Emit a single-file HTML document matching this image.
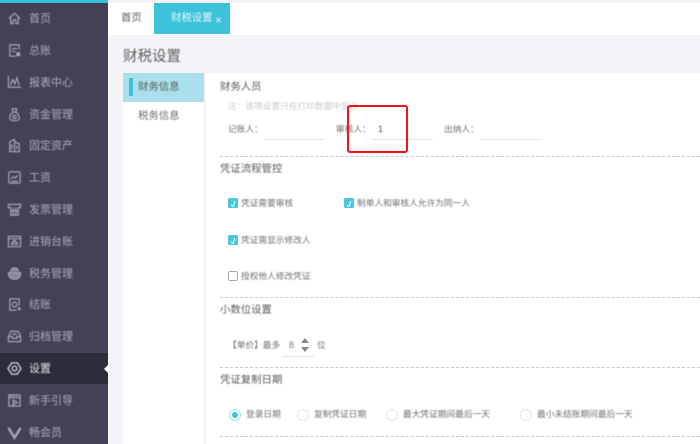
<!DOCTYPE html>
<html lang="zh">
<head>
<meta charset="utf-8">
<style>
html,body{margin:0;padding:0;width:700px;height:444px;overflow:hidden;background:#fff}
body{font-family:"Liberation Sans","Noto Sans CJK SC",sans-serif;position:relative}
.a{position:absolute}
.t{position:absolute;white-space:nowrap;line-height:14px;filter:blur(.45px)}
.m{position:absolute;left:29px;font-size:11px;color:#adadba;white-space:nowrap;line-height:14px;filter:blur(.45px)}
.i{position:absolute;left:7px;width:15px;height:15px;fill:none;stroke:#a5a5b3;stroke-width:1.3;filter:blur(.4px)}
.f{font-size:8.7px;color:#707070}
.h{font-size:10.4px;color:#5c5c5c}
.d{position:absolute;left:220px;width:480px;height:0;border-top:1px dashed #c9c9c9}
.u{position:absolute;height:0;border-top:1px solid #e2e2e2}
.c{position:absolute;width:10px;height:10px;background:#4cc6dd;border-radius:1.5px;left:228px;filter:blur(.25px)}
.r{position:absolute;width:10px;height:10px;border:1px solid #e4e4e4;border-radius:50%;background:#fff}
</style>
</head>
<body>
<!-- page background -->
<div class="a" style="left:108px;top:0;width:592px;height:444px;background:#f2f4f7"></div>
<div class="a" style="left:108px;top:3px;width:592px;height:32px;background:#fff"></div>
<!-- sidebar -->
<div class="a" style="left:0;top:0;width:108px;height:444px;background:#434156"></div>
<div class="a" style="left:0;top:0;width:108px;height:3px;background:#36c3da"></div>
<div class="a" style="left:0;top:353px;width:108px;height:31px;background:#2c2d3b"></div>
<div class="a" style="left:104px;top:364px;width:0;height:0;border-top:5px solid transparent;border-bottom:5px solid transparent;border-right:5px solid #fff"></div>

<svg class="i" style="top:11px" viewBox="0 0 16 16"><path d="M2 8L8 2.500L14 8M4 7V13.500H6.500V10Q8 8 9.500 10V13.500H12V7"/></svg>
<svg class="i" style="top:43px" viewBox="0 0 16 16"><path d="M13 7V2H3V14H9M5 6H11M5 9H9"/><rect x="10.500" y="10.500" width="3" height="3" fill="#a5a5b3"/></svg>
<svg class="i" style="top:74px" viewBox="0 0 16 16"><path d="M1.500 2V14H15M3.500 12L6 6L8.500 10.500L10.500 4L13 12"/></svg>
<svg class="i" style="top:107px" viewBox="0 0 16 16"><path d="M5.500 2H10.500L9.500 5.500H6.500ZM6.500 5.500Q2.500 8 3 12.500Q3.500 14.500 8 14.500Q12.500 14.500 13 12.500Q13.500 8 9.500 5.500"/><circle cx="8" cy="10.500" r="1.800"/></svg>
<svg class="i" style="top:138px" viewBox="0 0 16 16"><path d="M3 14.500V4L8 1.500V14.500M8 4L13 6V14.500M2 14.500H14M5 6.500V12M10.500 8V12"/></svg>
<svg class="i" style="top:170px" viewBox="0 0 16 16"><rect x="2" y="2" width="12" height="12" rx="1.500"/><path d="M4.500 9.500L7 7L9 8.500L11.500 5.500M4.500 12H11.500"/></svg>
<svg class="i" style="top:202px" viewBox="0 0 16 16"><path d="M1.500 2.500H14.500V6H12V14H4V6H1.500ZM6.500 6V14M9.500 6V14M4 9.500H12"/></svg>
<svg class="i" style="top:234px" viewBox="0 0 16 16"><rect x="1.500" y="2.500" width="13" height="11"/><path d="M1.500 5H14.500M5 11V9H7V7H9V9H11V11Z"/></svg>
<svg class="i" style="top:266px" viewBox="0 0 16 16"><path d="M4 6Q4 2 8 2Q12 2 12 6M1.500 7H14.500Q14.500 14 8 14Q1.500 14 1.500 7Z" fill="#a5a5b3" fill-opacity=".7"/></svg>
<svg class="i" style="top:297px" viewBox="0 0 16 16"><path d="M10 14H3V2H13V9"/><circle cx="8" cy="8" r="2.500"/><path d="M11 12.500H15M13 10.500V14.500"/></svg>
<svg class="i" style="top:329px" viewBox="0 0 16 16"><path d="M4 2.500H12L14.500 8V13.500H1.500V8ZM1.500 8H5.500V10H10.500V8H14.500M5.500 5.500H10.500"/></svg>
<svg class="i" style="top:361px;stroke:#dcdce4" viewBox="0 0 16 16"><path d="M5 2H11L15 8L11 14H5L1 8Z"/><circle cx="8" cy="8" r="2.500"/></svg>
<svg class="i" style="top:393px" viewBox="0 0 16 16"><rect x="2" y="2" width="12" height="12"/><path d="M2 5H14M4 2V5M7 2V5M10 2V5M6.500 7.500L11 10L6.500 12.500Z"/></svg>
<svg class="i" style="top:425px;stroke-width:2.600" viewBox="0 0 16 16"><path d="M1.500 3L8 13.500L14.500 3"/></svg>

<div class="m" style="top:12px">首页</div>
<div class="m" style="top:44px">总账</div>
<div class="m" style="top:76px">报表中心</div>
<div class="m" style="top:108px">资金管理</div>
<div class="m" style="top:139px">固定资产</div>
<div class="m" style="top:171px">工资</div>
<div class="m" style="top:203px">发票管理</div>
<div class="m" style="top:235px">进销台账</div>
<div class="m" style="top:267px">税务管理</div>
<div class="m" style="top:298px">结账</div>
<div class="m" style="top:330px">归档管理</div>
<div class="m" style="top:362px;color:#e4e4ea">设置</div>
<div class="m" style="top:394px">新手引导</div>
<div class="m" style="top:426px">畅会员</div>

<!-- tabs -->
<div class="t" style="left:121px;top:12px;font-size:10.4px;color:#5c5c5c">首页</div>
<div class="a" style="left:154px;top:3px;width:76px;height:31px;background:#3cc3da"></div>
<div class="t" style="left:171px;top:12px;font-size:10.4px;color:#e6f8fb">财税设置</div>
<div class="t" style="left:215px;top:13px;font-size:12px;color:#e6f8fb">×</div>

<!-- title -->
<div class="t" style="left:123px;top:49px;font-size:14.5px;line-height:16px;color:#5c5c5c">财税设置</div>

<!-- left tabs -->
<div class="a" style="left:123px;top:73px;width:81px;height:371px;background:#fff"></div>
<div class="a" style="left:123px;top:73px;width:81px;height:29px;background:#a9e0ec"></div>
<div class="a" style="left:129px;top:78px;width:4px;height:18px;background:#3cc3da"></div>
<div class="t" style="left:138px;top:81px;font-size:10.4px;color:#5c5c5c">财务信息</div>
<div class="t" style="left:138px;top:110px;font-size:10.4px;color:#6c6c6c">税务信息</div>

<!-- main -->
<div class="a" style="left:206px;top:73px;width:494px;height:371px;background:#fff"></div>

<div class="t h" style="left:220px;top:81px">财务人员</div>
<div class="t" style="left:228px;top:99px;font-size:8.7px;color:#c8c8c8">注：该项设置只在打印数据中显示</div>
<div class="t f" style="left:228px;top:122px">记账人：</div>
<div class="u" style="left:264px;top:139px;width:60px"></div>
<div class="t f" style="left:336px;top:122px">审核人：</div>
<div class="t" style="left:378px;top:122px;font-size:9px;color:#555">1</div>
<div class="u" style="left:372px;top:139px;width:61px"></div>
<div class="t f" style="left:444px;top:122px">出纳人：</div>
<div class="u" style="left:481px;top:139px;width:60px"></div>
<div class="d" style="top:156px"></div>

<!-- red box -->
<div class="a" style="left:347px;top:105px;width:57px;height:44px;border:2px solid #f0141a;border-radius:3px"></div>

<div class="t h" style="left:220px;top:163px">凭证流程管控</div>

<div class="c" style="top:198px"></div>
<svg class="a" style="left:228px;top:198px" width="10" height="10" viewBox="0 0 10 10"><path d="M3 7L5 8.500L7 3" fill="none" stroke="#fff" stroke-width="1"/></svg>
<div class="t f" style="left:241px;top:196px">凭证需要审核</div>

<div class="c" style="top:198px;left:344px"></div>
<svg class="a" style="left:344px;top:198px" width="10" height="10" viewBox="0 0 10 10"><path d="M3 7L5 8.500L7 3" fill="none" stroke="#fff" stroke-width="1"/></svg>
<div class="t f" style="left:357px;top:196px">制单人和审核人允许为同一人</div>

<div class="c" style="top:235px"></div>
<svg class="a" style="left:228px;top:235px" width="10" height="10" viewBox="0 0 10 10"><path d="M3 7L5 8.500L7 3" fill="none" stroke="#fff" stroke-width="1"/></svg>
<div class="t f" style="left:241px;top:233px">凭证需显示修改人</div>

<div class="a" style="left:228px;top:271px;width:8px;height:8px;border:1px solid #aaa;border-radius:2px;background:#fff"></div>
<div class="t f" style="left:241px;top:269px">授权他人修改凭证</div>

<div class="d" style="top:297px"></div>
<div class="t h" style="left:220px;top:304px">小数位设置</div>

<div class="t f" style="left:228px;top:338px">【单价】最多</div>
<div class="t" style="left:289px;top:338px;font-size:9px;color:#777">8</div>
<div class="a" style="left:301px;top:338px;width:0;height:0;border-left:4px solid transparent;border-right:4px solid transparent;border-bottom:5px solid #888"></div>
<div class="a" style="left:301px;top:347px;width:0;height:0;border-left:4px solid transparent;border-right:4px solid transparent;border-top:5px solid #888"></div>
<div class="u" style="left:282px;top:356px;width:32px"></div>
<div class="t f" style="left:317px;top:338px">位</div>

<div class="d" style="top:367px"></div>
<div class="t h" style="left:220px;top:374px">凭证复制日期</div>

<div class="r" style="left:229px;top:409px;border-color:#a5e2ee"></div>
<div class="a" style="left:232px;top:412px;width:6px;height:6px;border-radius:50%;background:#3cc3da"></div>
<div class="t f" style="left:246px;top:407px">登录日期</div>
<div class="r" style="left:297px;top:409px"></div>
<div class="t f" style="left:314px;top:407px">复制凭证日期</div>
<div class="r" style="left:386px;top:409px"></div>
<div class="t f" style="left:403px;top:407px">最大凭证期间最后一天</div>
<div class="r" style="left:520px;top:409px"></div>
<div class="t f" style="left:537px;top:407px">最小未结账期间最后一天</div>
<div class="d" style="top:436px"></div>
</body>
</html>
